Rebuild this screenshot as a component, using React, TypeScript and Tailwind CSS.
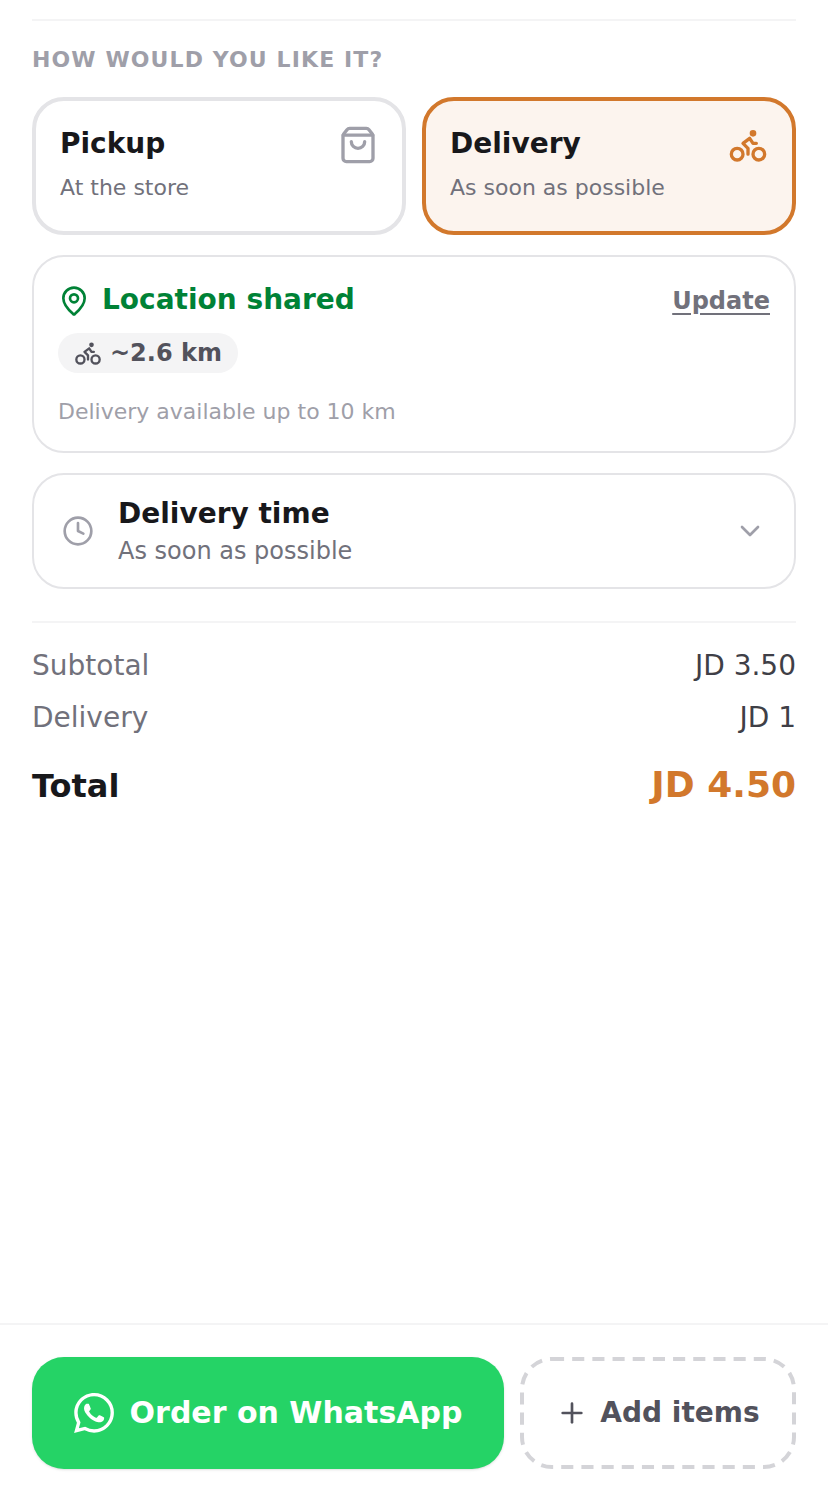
import { useState } from 'react';
import { Bike, ChevronDown, Clock, MapPin, Plus, ShoppingBag } from 'lucide-react';
import { SiWhatsapp } from 'react-icons/si';
import clsx from 'clsx';

type Method = 'pickup' | 'delivery';

const METHODS = [
  { id: 'pickup' as Method, title: 'Pickup', note: 'At the store', Icon: ShoppingBag },
  { id: 'delivery' as Method, title: 'Delivery', note: 'As soon as possible', Icon: Bike },
];

function SummaryRow({ label, value }: { label: string; value: string }) {
  return (
    <div className="flex justify-between text-[28px] leading-[38px]">
      <dt className="text-zinc-500">{label}</dt>
      <dd className="text-zinc-700">{value}</dd>
    </div>
  );
}

/** Dashed outline with longer dashes than the browser's own dashed border. */
function DashedOutline() {
  return (
    <svg className="pointer-events-none absolute inset-0 size-full text-zinc-300" aria-hidden="true">
      <rect
        x="2"
        y="2"
        rx="30"
        pathLength="702"
        fill="none"
        stroke="currentColor"
        strokeWidth="4"
        strokeDasharray="12 8"
        className="h-[calc(100%-4px)] w-[calc(100%-4px)]"
      />
    </svg>
  );
}

export default function App() {
  const [method, setMethod] = useState<Method>('delivery');

  return (
    <div className="flex min-h-screen flex-col bg-white font-['DejaVu_Sans',sans-serif] text-zinc-900">
      <main className="flex-1 px-8 pt-[19px]">
        <section className="border-t-2 border-zinc-100 pt-6">
          <h2 className="text-[22px] leading-[30px] font-bold tracking-wider text-zinc-400 uppercase">
            How would you like it?
          </h2>

          <div className="mt-[22px] grid grid-cols-2 gap-4">
            {METHODS.map(({ id, title, note, Icon }) => (
              <button
                key={id}
                type="button"
                aria-pressed={method === id}
                onClick={() => setMethod(id)}
                className={clsx(
                  'flex items-start justify-between rounded-[32px] border-4 px-6 pt-6 pb-7 text-left',
                  method === id ? 'border-[#d2782c] bg-[#fcf4ee]' : 'border-zinc-200 bg-white',
                )}
              >
                <span>
                  <span className="block text-[28px] leading-[38px] font-bold">{title}</span>
                  <span className="mt-2.5 block text-[22px] leading-[30px] text-zinc-500">
                    {note}
                  </span>
                </span>
                <Icon
                  className={clsx(
                    'size-10 shrink-0',
                    method === id ? 'text-[#d2782c]' : 'text-zinc-400',
                  )}
                />
              </button>
            ))}
          </div>

          <div className="mt-5 rounded-[32px] border-2 border-zinc-200 p-6">
            <div className="flex items-end justify-between">
              <div className="flex items-end gap-3 text-[28px] leading-[38px] font-bold text-green-700">
                <MapPin className="mb-0.5 size-8 shrink-0" />
                <span>Location shared</span>
              </div>
              <button
                type="button"
                className="text-2xl leading-9 font-bold text-zinc-500 underline underline-offset-4"
              >
                Update
              </button>
            </div>
            <div className="mt-3.5 flex w-fit items-center gap-2 rounded-full bg-zinc-100 px-4 text-2xl leading-10 font-bold text-zinc-600">
              <Bike className="size-7" />
              <span>~2.6 km</span>
            </div>
            <p className="mt-6 text-[22px] leading-[30px] text-zinc-400">
              Delivery available up to 10 km
            </p>
          </div>

          <button
            type="button"
            className="mt-5 flex w-full items-center gap-6 rounded-[32px] border-2 border-zinc-200 px-7 text-left"
          >
            <Clock className="size-8 shrink-0 text-zinc-400" />
            <span className="flex-1 pt-5 pb-[18px]">
              <span className="block text-[28px] leading-[38px] font-bold">Delivery time</span>
              <span className="block text-2xl leading-9 text-zinc-500">As soon as possible</span>
            </span>
            <ChevronDown className="size-8 shrink-0 text-zinc-400" />
          </button>
        </section>

        <dl className="mt-8 flex flex-col gap-3.5 border-t-2 border-zinc-100 pt-6">
          <SummaryRow label="Subtotal" value="JD 3.50" />
          <SummaryRow label="Delivery" value="JD 1" />
          <div className="mt-3.5 flex items-baseline justify-between font-bold">
            <dt className="text-[32px] leading-10">Total</dt>
            <dd className="text-4xl leading-10 text-[#d2782c]">JD 4.50</dd>
          </div>
        </dl>
      </main>

      <footer className="flex gap-4 border-t-2 border-zinc-100 px-8 pt-8 pb-[23px]">
        <button
          type="button"
          className="flex h-28 flex-1 items-center justify-center gap-4 rounded-[32px] bg-[#25d366] text-[30px] leading-10 font-bold text-white shadow-sm"
        >
          <SiWhatsapp className="size-10" />
          Order on WhatsApp
        </button>
        <button
          type="button"
          className="relative flex h-28 min-w-[276px] items-center justify-center gap-3 rounded-[32px] px-9 text-[28px] leading-[38px] font-bold text-zinc-600"
        >
          <DashedOutline />
          <Plus className="size-8" />
          Add items
        </button>
      </footer>
    </div>
  );
}
